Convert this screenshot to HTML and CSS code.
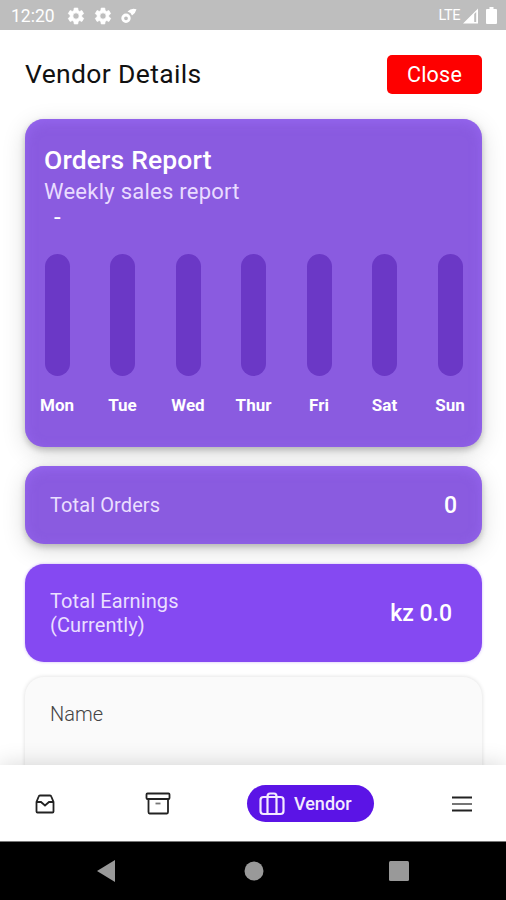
FILE: index.html
```html
<!DOCTYPE html>
<html lang="en">
  <head>
    <meta charset="UTF-8" />
    <meta name="viewport" content="width=device-width, initial-scale=1.0" />
    <title>Vendor Details</title>
    <link rel="stylesheet" href="styles.css" />
  </head>
  <body>
    <div class="status-bar">
      <span class="clock">12:20</span>
      <svg class="gear" viewBox="3 2 20 20"><path d="M19.400 13a7.500 7.500 0 0 0 0-2l2.100-1.600-2-3.500-2.500 1a7.500 7.500 0 0 0-1.700-1L15 3.200h-4l-.4 2.700a7.500 7.500 0 0 0-1.700 1l-2.500-1-2 3.500L6.500 11a7.500 7.500 0 0 0 0 2l-2.100 1.600 2 3.500 2.500-1a7.500 7.500 0 0 0 1.700 1l.4 2.700h4l.4-2.700a7.500 7.500 0 0 0 1.700-1l2.500 1 2-3.500zM13 15.500a3.500 3.500 0 1 1 0-7 3.500 3.500 0 0 1 0 7z" /></svg>
      <svg class="gear" viewBox="3 2 20 20"><path d="M19.400 13a7.500 7.500 0 0 0 0-2l2.100-1.600-2-3.500-2.500 1a7.500 7.500 0 0 0-1.700-1L15 3.200h-4l-.4 2.700a7.500 7.500 0 0 0-1.700 1l-2.500-1-2 3.500L6.500 11a7.500 7.500 0 0 0 0 2l-2.100 1.600 2 3.500 2.500-1a7.500 7.500 0 0 0 1.700 1l.4 2.700h4l.4-2.700a7.500 7.500 0 0 0 1.700-1l2.500 1 2-3.500zM13 15.500a3.500 3.500 0 1 1 0-7 3.500 3.500 0 0 1 0 7z" /></svg>
      <svg class="satellite" viewBox="0 0 16 16"><circle cx="5" cy="10.300" r="3.300" fill="none" stroke="#fff" stroke-width="2.800" /><path d="M6.500 3.500Q10.500-.5 15.500 1.300 14.500 5.500 11 7.500L9.500 5z" /></svg>
      <div class="signal">
        <span>LTE</span>
        <svg width="15" height="16" viewBox="0 0 15 16"><path d="M0 15.500 15 .5v15zM11.200 6v8h2V4z" fill-rule="evenodd" /></svg>
        <svg class="battery" width="11" height="17" viewBox="0 0 11 17"><path d="M3.500 0h4v2H10q1 0 1 1v13q0 1-1 1H1q-1 0-1-1V3q0-1 1-1h2.500z" /></svg>
      </div>
    </div>

    <main>
      <header>
        <h1>Vendor Details</h1>
        <button class="close">Close</button>
      </header>

      <section class="card report">
        <h2>Orders Report</h2>
        <p class="subtitle">Weekly sales report</p>
        <p class="range">-</p>
        <div class="chart">
          <div class="day"><i></i><span>Mon</span></div>
          <div class="day"><i></i><span>Tue</span></div>
          <div class="day"><i></i><span>Wed</span></div>
          <div class="day"><i></i><span>Thur</span></div>
          <div class="day"><i></i><span>Fri</span></div>
          <div class="day"><i></i><span>Sat</span></div>
          <div class="day"><i></i><span>Sun</span></div>
        </div>
      </section>

      <section class="card orders">
        <div class="label">Total Orders</div>
        <div class="value">0</div>
      </section>

      <section class="card earnings">
        <div class="label">
          <div>Total Earnings</div>
          <div>(Currently)</div>
        </div>
        <div class="value">kz 0.0</div>
      </section>

      <section class="card details">
        <div class="name">Name</div>
      </section>
    </main>

    <nav class="tabs">
      <svg class="inbox" width="20" height="20" viewBox="0 0 20 20"><path d="M1.500 8v9.500q0 1 1 1h15q1 0 1-1V8L16.300 2.500Q16 1.500 15 1.500H5Q4 1.500 3.700 2.500zM1.500 8H6L10 11.500 14 8h4.500" /></svg>
      <svg class="archive" width="26" height="23" viewBox="0 0 26 23"><rect x="1.500" y="1.500" width="23" height="5.500" rx="1" /><path d="M3.500 7v13q0 1.500 1 1.500h17.500q1 0 1-1.500V7" /><path d="M10.500 11.500h5" stroke="#777" /></svg>
      <a class="active">
        <svg width="26" height="24" viewBox="0 0 26 24"><rect x="1.500" y="5" width="23" height="17" rx="3" /><path d="M8.500 22V4.500Q8.500 1.500 11 1.500h4q2.500 0 2.500 3V22" /></svg>
        Vendor
      </a>
      <svg class="menu" width="22" height="16" viewBox="0 0 22 16"><path d="M1 1.500h20M1 14.500h20" /><path d="M1 8h20" stroke="#666" /></svg>
    </nav>

    <div class="system-bar">
      <svg width="18" height="22" viewBox="0 0 18 22"><path d="M0 11 18 0v22z" /></svg>
      <svg class="home" width="20" height="20" viewBox="0 0 20 20"><circle cx="10" cy="10" r="9.500" /></svg>
      <svg width="20" height="20" viewBox="0 0 20 20"><rect width="20" height="20" rx="1.500" /></svg>
    </div>
  </body>
</html>
```
FILE: styles.css
```css
* {
  box-sizing: border-box;
}
body {
  display: flex;
  flex-direction: column;
  height: 900px;
  margin: 0;
  overflow: hidden;
  background: #fff;
  font-family: Roboto, sans-serif;
}
h1,
h2,
p {
  margin: 0;
  font-weight: 400;
}
svg {
  display: block;
  flex: none;
}
.status-bar {
  display: flex;
  align-items: center;
  height: 30px;
  padding: 1px 9px 0 11px;
  background: #bebebe;
  color: #fff;
  fill: #fff;
  font-size: 17.5px;
}
.clock {
  width: 56px;
}
.gear {
  width: 18px;
  height: 18px;
  margin-right: 9px;
  fill-rule: evenodd;
  stroke: #fff;
  stroke-width: 0.8;
}
.satellite {
  width: 16px;
  height: 16px;
}
.signal {
  display: flex;
  align-items: center;
  margin-left: auto;
  font-size: 14.5px;
  letter-spacing: -0.4px;
}
.signal svg {
  margin-left: 3px;
}
.signal .battery {
  margin-left: 8px;
}
main {
  flex: 1;
  min-height: 0;
  overflow: hidden;
  padding: 25px 24px 0 25px;
}
header {
  display: flex;
  align-items: center;
  justify-content: space-between;
  height: 39px;
  margin-bottom: 25px;
}
h1 {
  padding-bottom: 2px;
  color: #111;
  font-size: 26.5px;
  letter-spacing: 0.35px;
}
.close {
  width: 95px;
  height: 39px;
  padding: 0 0 1px;
  border: 0;
  border-radius: 5px;
  background: #fe0000;
  color: #fff;
  font: 21.5px Roboto, sans-serif;
  letter-spacing: 0.2px;
}
.card {
  border-radius: 19px;
  color: #fff;
}
.report,
.orders {
  background: #8a5be0;
  box-shadow: 0 3px 6px rgba(0, 0, 0, 0.22), 0 6px 24px rgba(0, 0, 0, 0.14),
    inset 0 3px 12px rgba(154, 107, 245, 0.7);
}
.report {
  height: 328px;
  margin-bottom: 19px;
  padding: 25px 19px 0 19px;
}
h2 {
  font-size: 26.5px;
  font-weight: 500;
  line-height: 32px;
  letter-spacing: 0.15px;
}
.subtitle {
  padding-top: 1px;
  font-size: 22px;
  line-height: 30px;
  letter-spacing: 0.25px;
  color: #e9dcff;
}
.range {
  padding-left: 10px;
  font-size: 24px;
  line-height: 21px;
}
.chart {
  display: flex;
  justify-content: space-between;
  padding-top: 26px;
}
.day {
  display: flex;
  flex-direction: column;
  align-items: center;
  width: 26px;
}
.day i {
  width: 25px;
  height: 122px;
  border-radius: 13px;
  background: #6b38c6;
}
.day span {
  margin-top: 18px;
  font-size: 17px;
  font-weight: 700;
  line-height: 22px;
}
.orders,
.earnings {
  display: flex;
  align-items: center;
  justify-content: space-between;
  padding: 0 25px;
}
.orders {
  height: 78px;
  margin-bottom: 20px;
}
.earnings {
  height: 98px;
  margin-bottom: 15px;
  padding-right: 30px;
  background: #8549f2;
  box-shadow: 0 0 3px rgba(133, 73, 242, 0.4);
}
.label {
  color: #eadfff;
  font-size: 20px;
  line-height: 24px;
  letter-spacing: 0.1px;
}
.value {
  font-size: 23px;
  font-weight: 500;
}
.details {
  height: 200px;
  padding: 25px;
  background: #fafafa;
  box-shadow: 0 0 4px rgba(0, 0, 0, 0.14);
}
.name {
  color: #444;
  font-size: 20px;
  font-weight: 300;
  line-height: 25px;
}
.tabs {
  position: relative;
  display: flex;
  align-items: center;
  height: 77px;
  padding: 1px 33px 0 35px;
  background: #fff;
  border-bottom: 1px solid #777;
  box-shadow: 0 0 22px rgba(0, 0, 0, 0.16);
  fill: none;
  stroke: #222;
  stroke-width: 1.8;
}
.archive {
  margin: 0 76px 0 90px;
}
.active {
  display: flex;
  align-items: center;
  gap: 9px;
  width: 127px;
  height: 37px;
  padding-left: 12px;
  border-radius: 19px;
  background: #5b14e6;
  color: #f3eaff;
  stroke: #f3eaff;
  stroke-width: 2.2;
  font-size: 18px;
  font-weight: 500;
}
.menu {
  margin-left: auto;
}
.system-bar {
  display: flex;
  align-items: center;
  height: 58px;
  padding: 0 97px;
  background: #000;
  fill: #999;
}
.home {
  margin: 0 auto 0 129px;
}
```
